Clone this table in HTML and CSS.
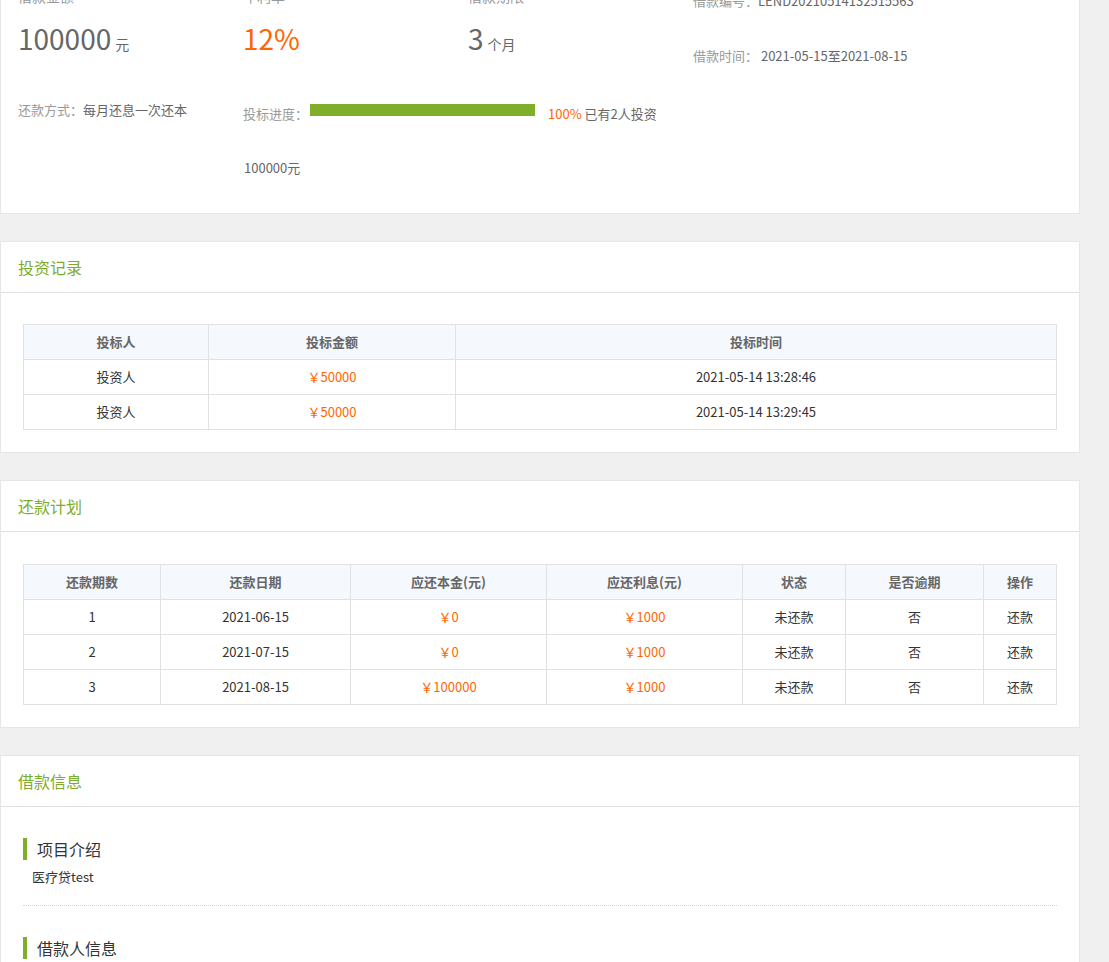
FILE: index.html
```html
<!DOCTYPE html>
<html lang="zh-CN">
<head>
<meta charset="utf-8">
<title>借款详情</title>
<link rel="stylesheet" href="styles.css">
</head>
<body>
<div class="page">
  <section class="card summary">
    <div class="summary-top">
      <div class="stat">
        <div class="stat-label">借款金额</div>
        <div class="stat-value">100000<span class="unit">元</span></div>
      </div>
      <div class="stat">
        <div class="stat-label">年利率</div>
        <div class="stat-value accent">12%</div>
      </div>
      <div class="stat">
        <div class="stat-label">借款期限</div>
        <div class="stat-value">3<span class="unit">个月</span></div>
      </div>
      <div class="meta">
        <div class="meta-line"><span class="k">借款编号：</span><span class="v">LEND20210514132515563</span></div>
        <div class="meta-line second"><span class="k">借款时间：</span><span class="v">&nbsp;2021-05-15至2021-08-15</span></div>
      </div>
    </div>
    <div class="summary-bottom">
      <div class="repay-way"><span class="k">还款方式：</span><span class="v">每月还息一次还本</span></div>
      <div class="progress-block">
        <div class="progress-row">
          <span class="k">投标进度：</span>
          <div class="bar"><div class="bar-fill"></div></div>
          <span class="pct"><span class="accent">100%</span> 已有2人投资</span>
        </div>
        <div class="remain">100000元</div>
      </div>
    </div>
  </section>

  <section class="card">
    <div class="card-head">投资记录</div>
    <div class="card-body">
      <table class="grid">
        <colgroup><col class="w185"><col class="w247"><col></colgroup>
        <thead><tr><th>投标人</th><th>投标金额</th><th>投标时间</th></tr></thead>
        <tbody>
          <tr><td>投资人</td><td class="accent">￥50000</td><td>2021-05-14 13:28:46</td></tr>
          <tr><td>投资人</td><td class="accent">￥50000</td><td>2021-05-14 13:29:45</td></tr>
        </tbody>
      </table>
    </div>
  </section>

  <section class="card">
    <div class="card-head">还款计划</div>
    <div class="card-body plan">
      <table class="grid">
        <colgroup><col class="w137"><col class="w190"><col class="w196"><col class="w196"><col class="w103"><col class="w138"><col></colgroup>
        <thead><tr><th>还款期数</th><th>还款日期</th><th>应还本金(元)</th><th>应还利息(元)</th><th>状态</th><th>是否逾期</th><th>操作</th></tr></thead>
        <tbody>
          <tr><td>1</td><td>2021-06-15</td><td class="accent">￥0</td><td class="accent">￥1000</td><td>未还款</td><td>否</td><td>还款</td></tr>
          <tr><td>2</td><td>2021-07-15</td><td class="accent">￥0</td><td class="accent">￥1000</td><td>未还款</td><td>否</td><td>还款</td></tr>
          <tr><td>3</td><td>2021-08-15</td><td class="accent">￥100000</td><td class="accent">￥1000</td><td>未还款</td><td>否</td><td>还款</td></tr>
        </tbody>
      </table>
    </div>
  </section>

  <section class="card">
    <div class="card-head">借款信息</div>
    <div class="card-body info">
      <div class="info-item">
        <h3 class="info-title">项目介绍</h3>
        <p class="info-desc">医疗贷test</p>
      </div>
      <div class="info-item">
        <h3 class="info-title">借款人信息</h3>
        <p class="info-desc">姓名：张**</p>
      </div>
    </div>
  </section>
</div>
</body>
</html>
```

FILE: styles.css
```css
* { box-sizing: border-box; }
html, body { margin: 0; padding: 0; }
body {
  background: #f0f0f0;
  font-family: "Microsoft YaHei", "Noto Sans CJK SC", sans-serif;
  font-size: 13px;
  color: #333;
}
.page {
  width: 1080px;
  margin-top: -35px;
}
.card {
  background: #fff;
  border: 1px solid #e6e6e6;
  margin-bottom: 27px;
}
.accent { color: #ff6600; }

/* summary */
.summary { padding: 20px 17px 35px; }
.summary-top,
.summary-bottom {
  display: grid;
  grid-template-columns: 225px 225px 225px 225px;
}
.stat-label {
  line-height: 20px;
  font-size: 14px;
  color: #999;
}
.stat-value {
  margin-top: 12px;
  line-height: 40px;
  font-size: 28px;
  color: #666;
}
.stat-value.accent { color: #ff6600; }
.unit {
  font-size: 14px;
  margin-left: 4px;
  color: #666;
}
.meta { padding-top: 5px; grid-column: 4; }
.meta-line { line-height: 20px; white-space: nowrap; }
.meta-line.second { margin-top: 35px; }
.k { color: #999; }
.v { color: #666; }
.summary-bottom { margin-top: 34px; }
.repay-way { line-height: 20px; }
.progress-block {
  grid-column: 2 / span 3;
  padding-top: 4px;
}
.progress-row {
  display: flex;
  align-items: flex-start;
  line-height: 20px;
}
.progress-row .k { width: 67px; }
.bar {
  width: 225px;
  height: 12px;
  background: #eee;
}
.bar-fill {
  width: 100%;
  height: 100%;
  background: #7fae2a;
}
.pct { margin-left: 13px; color: #666; }
.remain {
  margin-top: 34px;
  line-height: 20px;
  color: #666;
  padding-left: 1px;
}

/* card head */
.card-head {
  height: 51px;
  line-height: 50px;
  padding-left: 17px;
  border-bottom: 1px solid #e0e0e0;
  font-size: 16px;
  color: #7cac2c;
}
.card-body { padding: 31px 22px 22px; }
.card-body.plan { padding-top: 32px; }

/* tables */
.grid {
  width: 100%;
  border-collapse: collapse;
  table-layout: fixed;
  border: 1px solid #e1e1e1;
}
.grid th,
.grid td {
  border: 1px solid #e1e1e1;
  height: 34px;
  padding: 0;
  line-height: 34px;
  text-align: center;
  font-size: 13px;
}
.grid th {
  background: #f5f8fc;
  color: #666;
  font-weight: bold;
}
.grid td { color: #333; }
.grid td.accent { color: #ff6600; }
.w185 { width: 185px; }
.w247 { width: 247px; }
.w137 { width: 137px; }
.w190 { width: 190px; }
.w196 { width: 196px; }
.w103 { width: 103px; }
.w138 { width: 138px; }

/* info */
.card-body.info { padding: 31px 22px 40px; }
.info-item + .info-item {
  border-top: 1px dotted #d5d5d5;
  margin-top: 18px;
  padding-top: 31px;
}
.info-title {
  margin: 0;
  height: 22px;
  line-height: 22px;
  border-left: 4px solid #7fae2a;
  padding-left: 10px;
  font-size: 16px;
  font-weight: normal;
  color: #333;
}
.info-desc {
  margin: 7px 0 0;
  padding-left: 9px;
  line-height: 20px;
  color: #333;
}
```
